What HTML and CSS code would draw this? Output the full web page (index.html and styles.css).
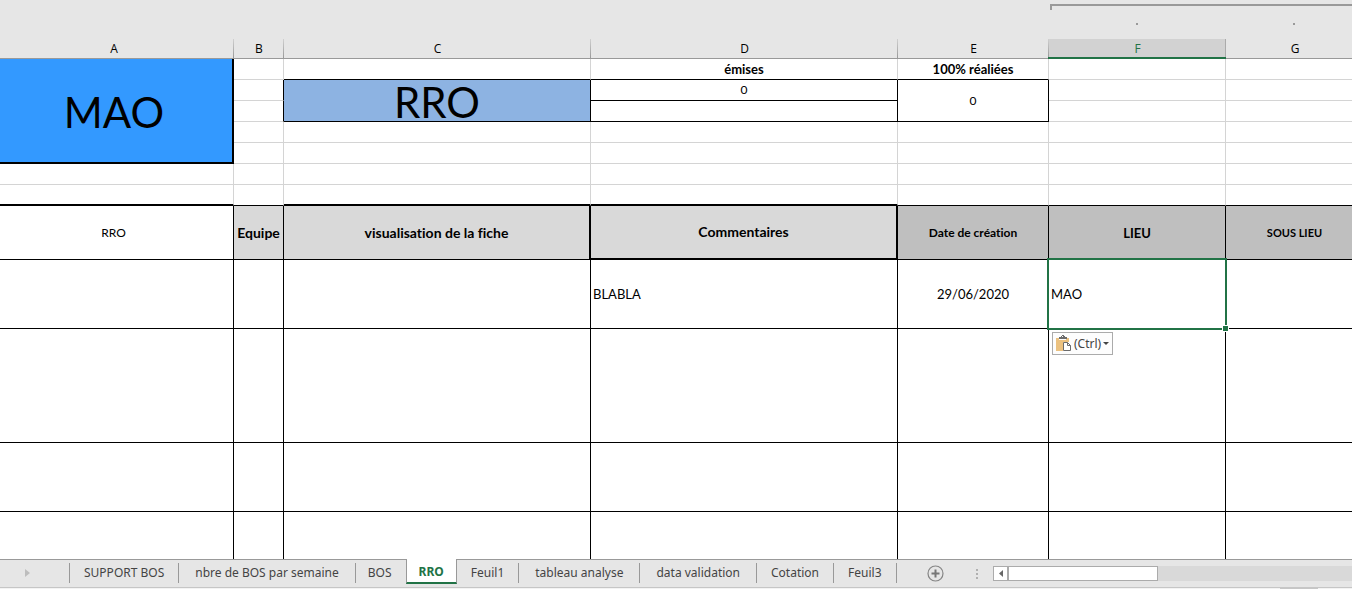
FILE: index.html
```html
<!DOCTYPE html>
<html lang="fr">
<head>
<meta charset="utf-8">
<title>RRO</title>
<link rel="stylesheet" href="styles.css">
</head>
<body>
<main class="sheet">
  <div class="outline">
    <div class="outline-group">
      <span class="outline-dot"></span>
      <span class="outline-dot"></span>
    </div>
  </div>
  <table class="grid">
    <colgroup>
      <col class="col-a"><col class="col-b"><col class="col-c"><col class="col-d"><col class="col-e"><col class="col-f"><col>
    </colgroup>
    <thead>
      <tr class="letters">
        <th scope="col">A</th><th scope="col">B</th><th scope="col">C</th><th scope="col">D</th><th scope="col">E</th><th scope="col" class="current">F</th><th scope="col">G</th>
      </tr>
    </thead>
    <tbody>
      <tr class="short">
        <td class="banner" rowspan="5">MAO</td><td></td><td class="ink-bottom"></td><td class="ink-bottom strong">émises</td><td class="ink-bottom strong">100% réaliées</td><td></td><td></td>
      </tr>
      <tr class="short">
        <td class="ink-right"></td><td class="title ink" rowspan="2">RRO</td><td class="ink">0</td><td class="ink" rowspan="2">0</td><td></td><td></td>
      </tr>
      <tr class="short"><td class="ink-right"></td><td class="ink"></td><td></td><td></td></tr>
      <tr class="short"><td></td><td></td><td></td><td></td><td></td><td></td></tr>
      <tr class="short"><td></td><td></td><td></td><td></td><td></td><td></td></tr>
      <tr class="short"><td></td><td></td><td></td><td></td><td></td><td></td><td></td></tr>
      <tr class="short"><td class="thick-bottom"></td><td class="ink-bottom"></td><td class="thick-bottom"></td><td class="thick-bottom"></td><td class="ink-bottom"></td><td class="ink-bottom"></td><td class="ink-bottom"></td></tr>
      <tr class="heads">
        <td class="ink">RRO</td>
        <td class="ink light large">Equipe</td>
        <td class="ink light large thick-right">visualisation de la fiche</td>
        <td class="ink light large thick-right thick-bottom">Commentaires</td>
        <td class="ink dark bold">Date de création</td>
        <td class="ink dark strong">LIEU</td>
        <td class="ink dark bold small">SOUS LIEU</td>
      </tr>
      <tr class="medium inked entry">
        <td></td><td></td><td></td><td class="start">BLABLA</td><td>29/06/2020</td>
        <td class="start selected">MAO
          <span class="selection"><span class="handle"></span></span>
          <button class="paste" type="button">
            <svg width="16" height="17" viewBox="0 0 16 17" aria-hidden="true">
              <path fill="#ebc17f" d="M0 3h3v2h7V3h3v4H7v9H0z"/>
              <path fill="#6b6b6b" d="M3 2h2V1h1V0h2v1h1v1h2v2H3zM6 1v1h1V1z"/>
              <path fill="#fff" stroke="#6b6b6b" d="M7.500 7.500h4l3 3v5h-7z"/>
              <path fill="none" stroke="#6b6b6b" d="M11.500 7.500v3h3"/>
            </svg>
            <span>(Ctrl)</span>
            <svg width="6" height="3" viewBox="0 0 6 3" aria-hidden="true"><path fill="#444" d="M0 0h6L3 3z"/></svg>
          </button>
        </td>
        <td></td>
      </tr>
      <tr class="tall inked"><td></td><td></td><td></td><td></td><td></td><td></td><td></td></tr>
      <tr class="medium inked"><td></td><td></td><td></td><td></td><td></td><td></td><td></td></tr>
      <tr class="medium inked"><td></td><td></td><td></td><td></td><td></td><td></td><td></td></tr>
    </tbody>
  </table>
</main>
<footer class="bottom">
  <nav class="tabs" aria-label="Feuilles">
    <button class="next" type="button" aria-label="Feuille suivante">
      <svg width="5" height="8" viewBox="0 0 5 8"><path fill="#bdbdbd" d="M0 0l5 4-5 4z"/></svg>
    </button>
    <button class="tab" type="button">SUPPORT BOS</button>
    <button class="tab roomy" type="button">nbre de BOS par semaine</button>
    <button class="tab before" type="button">BOS</button>
    <button class="tab active" type="button" aria-current="page">RRO</button>
    <button class="tab" type="button">Feuil1</button>
    <button class="tab roomy" type="button">tableau analyse</button>
    <button class="tab roomy" type="button">data validation</button>
    <button class="tab" type="button">Cotation</button>
    <button class="tab" type="button">Feuil3</button>
    <button class="add" type="button" aria-label="Nouvelle feuille">
      <svg width="17" height="17" viewBox="0 0 17 17"><circle cx="8.500" cy="8.500" r="7.500" fill="none" stroke="#858585" stroke-width="1.200"/><path stroke="#777" stroke-width="2" d="M4.500 8.500h8M8.500 4.500v8"/></svg>
    </button>
  </nav>
  <div class="splitter"><i></i><i></i><i></i></div>
  <div class="scroll">
    <button class="scroll-left" type="button" aria-label="Défiler à gauche">
      <svg width="4" height="7" viewBox="0 0 4 7"><path fill="#666" d="M4 0v7L0 3.500z"/></svg>
    </button>
    <div class="thumb"></div>
  </div>
</footer>
<div class="status"><span class="status-mark"></span></div>
</body>
</html>
```
FILE: styles.css
```css
* { box-sizing: border-box; }

body {
  margin: 0;
  height: 100vh;
  display: flex;
  flex-direction: column;
  overflow: hidden;
  background: #fff;
  color: #000;
  font-family: Lato, "Open Sans", sans-serif;
  font-size: 12px;
  font-variant-ligatures: none;
}

button {
  margin: 0;
  padding: 0;
  border: 0;
  background: none;
  font: inherit;
  color: inherit;
}

svg { display: block; flex: none; }

/* Worksheet */
.sheet {
  flex: 1;
  min-height: 0;
  overflow: hidden;
}

.outline {
  height: 39px;
  padding: 4px 0 0 1050px;
  margin-right: -12px;
  background: #e6e6e6;
}

.outline-group {
  display: grid;
  grid-template-columns: 173px 1fr;
  justify-items: center;
  padding-top: 17px;
  background:
    linear-gradient(#999, #999) 0 0 / 100% 2px no-repeat,
    linear-gradient(#999, #999) 0 0 / 2px 6px no-repeat;
}

.outline-dot {
  width: 2px;
  height: 2px;
  margin-top: 2px;
  background: #999;
}

.grid {
  width: calc(100% + 12px);
  table-layout: fixed;
  border-collapse: separate;
  border-spacing: 0;
}

.col-a { width: 234px; }
.col-b { width: 50px; }
.col-c, .col-d { width: 307px; }
.col-e { width: 151px; }
.col-f { width: 177px; }

.grid th,
.grid td {
  padding: 0;
  text-align: center;
  vertical-align: middle;
  white-space: nowrap;
  line-height: 18px;
}

.grid td {
  border: 0 solid #d4d4d4;
  border-width: 0 1px 1px 0;
}

.grid th:first-child,
.grid .heads td:first-child { padding-right: 6px; }

.letters th {
  height: 20px;
  border-bottom: 1px solid #999;
  background: linear-gradient(#d0d0d0, #999) right / 1px 100% no-repeat #e6e6e6;
  font-family: "Open Sans", sans-serif;
  font-size: 12px;
  font-weight: 400;
}

.letters .current {
  position: relative;
  background: linear-gradient(#ababab, #ababab) right / 1px 100% no-repeat #d2d2d2;
  color: #217346;
}

.letters .current::after {
  content: "";
  position: absolute;
  left: -1px;
  right: 0;
  bottom: -1px;
  height: 2px;
  background: #217346;
}

.short { height: 21px; }
.heads { height: 54px; }
.medium { height: 69px; }
.tall { height: 114px; }

.grid .ink, .inked td { border-color: #000; }
.grid .ink-right { border-right-color: #000; }
.grid .ink-bottom { border-bottom-color: #000; }
.grid .thick-right { border-right: 2px solid #000; }
.grid .thick-bottom { border-bottom: 2px solid #000; }

.grid .banner {
  padding: 3px 4px 0 0;
  border: 0 solid #000;
  border-width: 0 2px 2px 0;
  background: #3399ff;
  font-size: 42px;
  line-height: 48px;
}

.grid .title {
  padding-top: 3px;
  background: #8db3e2;
  font-size: 42px;
  line-height: 37px;
}

.entry { font-size: 13px; }
.bold { font-weight: 700; }
.strong { font-weight: 700; font-size: 13px; }
.large { font-weight: 700; font-size: 14px; }
.small { font-size: 11px; }
.light { background: #d9d9d9; }
.dark { background: #bfbfbf; }

.grid .start {
  padding-left: 2px;
  text-align: left;
}

.selected { position: relative; }

.selection {
  position: absolute;
  inset: -2px;
  border: 2px solid #217346;
}

.handle {
  position: absolute;
  right: -4px;
  bottom: -4px;
  width: 7px;
  height: 7px;
  border: 1px solid #fff;
  background: #217346;
}

.paste {
  position: absolute;
  top: calc(100% + 4px);
  left: 3px;
  display: flex;
  align-items: center;
  gap: 2px;
  height: 23px;
  padding: 0 3px;
  border: 1px solid #ababab;
  background: #fdfdfd;
  color: #444;
  font-family: "Noto Sans", sans-serif;
  font-size: 12px;
}

/* Sheet tabs and scroll bar */
.bottom {
  display: flex;
  height: 28px;
  border-top: 1px solid #999;
  background: #e6e6e6;
  color: #444;
  font-family: "Noto Sans", sans-serif;
  font-size: 12px;
}

.tabs {
  flex: 1;
  display: flex;
  min-width: 0;
}

.next, .tab {
  height: 20px;
  margin-top: 3px;
  border-right: 1px solid #999;
  line-height: 18px;
  white-space: nowrap;
}

.next {
  width: 70px;
  padding-left: 25px;
}

.tab { padding: 0 14px; }

.tab.roomy { padding: 0 16px; }

.tab.before {
  padding: 0 14px 0 12px;
  border-right: 0;
}

.tab.active {
  height: 25px;
  margin-top: -1px;
  padding: 2px 12px 0;
  border-left: 1px solid #999;
  border-bottom: 2px solid #217346;
  background: #fff;
  color: #217346;
  font-weight: 700;
}

.add {
  margin-left: 30px;
  align-self: center;
}

.splitter {
  display: flex;
  flex-direction: column;
  justify-content: center;
  gap: 2px;
  width: 17px;
}

.splitter i {
  width: 2px;
  height: 2px;
  background: #b0b0b0;
}

.scroll {
  display: flex;
  flex: 0 0 359px;
  height: 15px;
  margin-top: 6px;
  background: #d9d9d9;
}

.scroll-left {
  display: flex;
  align-items: center;
  justify-content: center;
  width: 15px;
  border: 1px solid #ababab;
  background: #fff;
}

.thumb {
  width: 150px;
  border: 1px solid #ababab;
  background: #fff;
}

.status {
  display: flex;
  justify-content: flex-end;
  height: 2px;
  padding-right: 34px;
  border-top: 1px solid #c6c6c6;
  background: #f3f3f3;
}

.status-mark {
  width: 38px;
  background: #c6c6c6;
}
```
